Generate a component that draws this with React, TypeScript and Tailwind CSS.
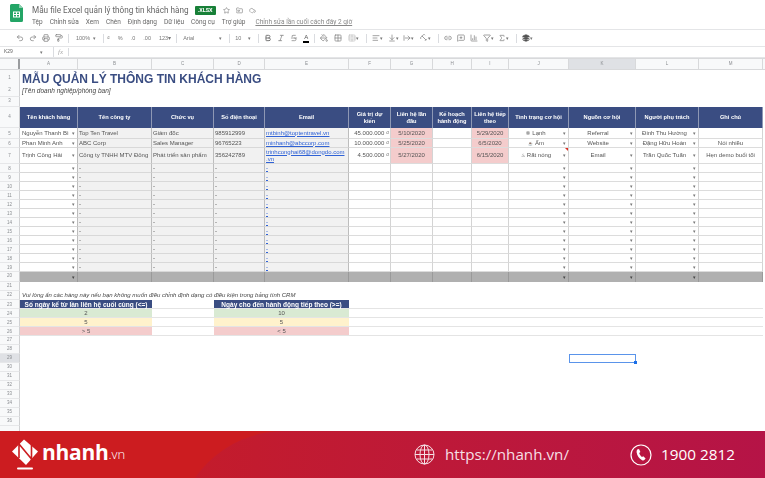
import {
  Undo2, Redo2, Printer, PaintRoller, Star, FolderInput, CloudCheck, Bold, Italic, Strikethrough,
  PaintBucket, Grid2x2, TableCellsMerge, AlignLeft, ArrowDownToLine, ArrowRightFromLine, Type, Link2,
  MessageSquarePlus, ChartColumn, Filter, Sigma, Layers, Snowflake,
} from "lucide-react";

const COLS = "grid-cols-[20px_58px_74px_62px_51px_84px_42px_42px_39px_37px_60px_67px_63px_64px]";
const BLUE = "bg-[#3a4d82]";
const GREY = "bg-[#f1f1f1]";

const columns = ["A", "B", "C", "D", "E", "F", "G", "H", "I", "J", "K", "L", "M"];

const headers = [
  "Tên khách hàng", "Tên công ty", "Chức vụ", "Số điện thoại", "Email", "Giá trị dự\nkiến",
  "Liên hệ lần\nđầu", "Kế hoạch\nhành động", "Liên hệ tiếp\ntheo", "Tình trạng cơ hội",
  "Nguồn cơ hội", "Người phụ trách", "Ghi chú",
];

const people = [
  {
    h: "h-[11px]", n: "5", name: "Nguyễn Thanh Bì", co: "Top Ten Travel", role: "Giám đốc", phone: "985912999",
    mail: ["mtbinh@toptentravel.vn"], val: "45.000.000 ₫", first: "5/10/2020", next: "5/29/2020",
    status: "Lạnh", icon: "snow", src: "Referral", owner: "Đinh Thu Hường", note: "",
  },
  {
    h: "h-[9px]", n: "6", name: "Phan Minh Anh", co: "ABC Corp", role: "Sales Manager", phone: "96765223",
    mail: ["minhanh@abccorp.com"], val: "10.000.000 ₫", first: "5/25/2020", next: "6/5/2020",
    status: "Ấm", icon: "warm", src: "Website", owner: "Đặng Hữu Hoàn", note: "Nói nhiều",
  },
  {
    h: "h-[16px]", n: "7", name: "Trịnh Công Hải", co: "Công ty TNHH MTV Đông", role: "Phát triển sản phẩm", phone: "356242789",
    mail: ["trinhconghai68@dongdo.com", ".vn"], val: "4.500.000 ₫", first: "5/27/2020", next: "6/15/2020",
    status: "Rất nóng", icon: "hot", src: "Email", owner: "Trần Quốc Tuấn", note: "Hẹn demo buổi tối",
  },
];

const emptyRows = ["8", "9", "10", "11", "12", "13", "14", "15", "16", "17", "18", "19"];

function RowNo({ n, active }: { n: string; active?: boolean }) {
  return (
    <div className={`flex items-center justify-center border-r border-b border-r-[#d0d1d3] border-b-[#e6e7e9] text-[4.5px] text-[#8a8d91] ${active ? "bg-[#dfe1e5]" : "bg-[#f8f9fa]"}`}>
      {n}
    </div>
  );
}

function Arrow({ dark }: { dark?: boolean }) {
  return <span className={`mr-[2px] shrink-0 text-[5px] leading-none ${dark ? "text-[#444]" : "text-[#777]"}`}>▾</span>;
}

function Tool({ label, className = "" }: { label: string; className?: string }) {
  return <span className={`text-[5.5px] text-[#777] ${className}`}>{label}</span>;
}

function Sep() {
  return <span className="mx-[5px] h-[9px] w-px shrink-0 bg-[#dadce0]" />;
}

function Toolbar() {
  const ic = "h-[8px] w-[8px] shrink-0 text-[#777]";
  return (
    <div className="flex h-[18px] items-center border-y border-[#e4e5e7] pl-[16px]">
      <div className="flex items-center gap-[5px]">
        <Undo2 className={ic} /><Redo2 className={ic} /><Printer className={ic} /><PaintRoller className={ic} />
      </div>
      <Sep />
      <Tool label="100%" className="ml-[2px] w-[17px]" /><Arrow />
      <Sep />
      <div className="-ml-[2px] flex items-center gap-[8px]">
        <Tool label="₫" /><Tool label="%" /><Tool label=".0" /><Tool label=".00" /><Tool label="123▾" />
      </div>
      <Sep />
      <Tool label="Arial" className="ml-[1px] w-[36px]" /><Arrow />
      <Sep />
      <Tool label="10" className="w-[13px]" /><Arrow />
      <Sep />
      <div className="flex items-center gap-[5px]">
        <Bold className={ic} strokeWidth={3} /><Italic className={ic} /><Strikethrough className={ic} />
        <span className="border-b-2 border-black px-[1px] text-[6px] leading-[7px] text-[#555]">A</span>
      </div>
      <Sep />
      <div className="flex items-center gap-[6px]">
        <PaintBucket className={ic} /><Grid2x2 className={ic} /><TableCellsMerge className="h-[8px] w-[8px] shrink-0 text-[#bbb]" />
      </div>
      <Arrow />
      <Sep />
      <AlignLeft className={ic} /><Arrow />
      <ArrowDownToLine className={`${ic} ml-[3px]`} /><Arrow />
      <ArrowRightFromLine className={`${ic} ml-[2px]`} /><Arrow />
      <Type className={`${ic} ml-[4px] -rotate-45`} /><Arrow />
      <Sep />
      <div className="flex items-center gap-[5px]">
        <Link2 className={ic} /><MessageSquarePlus className={ic} /><ChartColumn className={ic} /><Filter className={ic} />
      </div>
      <Arrow />
      <Sigma className={`${ic} ml-[2px]`} /><Arrow />
      <Sep />
      <Layers className="h-[8px] w-[8px] shrink-0 fill-[#555] text-[#555]" /><Arrow />
    </div>
  );
}

function PersonRow({ p }: { p: (typeof people)[number] }) {
  const line = "border-r border-b border-r-[#d4d4d4] border-b-[#dcdcdc]";
  const greyCell = `${GREY} flex items-center overflow-hidden whitespace-nowrap border-r border-b border-r-[#bdbdbd] border-b-[#d8d8d8] px-[1px]`;
  return (
    <div className={`grid ${COLS} ${p.h} text-[6px] leading-[7px] text-[#555]`}>
      <RowNo n={p.n} />
      <div className="flex items-center overflow-hidden whitespace-nowrap border-r border-b border-r-[#bdbdbd] border-b-[#d8d8d8] pl-[2px]">
        <span className="flex-1 overflow-hidden">{p.name}</span><Arrow />
      </div>
      <div className={greyCell}>{p.co}</div>
      <div className={greyCell}>{p.role}</div>
      <div className={greyCell}>{p.phone}</div>
      <div className={`${GREY} flex flex-col justify-center overflow-hidden border-r border-b border-r-[#bdbdbd] border-b-[#d8d8d8] px-[1px] text-[#2f62d6] underline`}>
        {p.mail.map((m) => <span key={m} className="whitespace-nowrap">{m}</span>)}
      </div>
      <div className={`${line} flex items-center justify-end pr-[1px] whitespace-nowrap`}>{p.val}</div>
      <div className={`${line} flex items-center justify-center bg-[#f4cccc]`}>{p.first}</div>
      <div className={line} />
      <div className={`${line} flex items-center justify-center bg-[#f4cccc]`}>{p.next}</div>
      <div className={`${line} relative flex items-center whitespace-nowrap`}>
        <span className="flex flex-1 items-center justify-center gap-[2px]">
          {p.icon === "snow" && <Snowflake className="h-[4px] w-[4px] text-[#666]" />}
          {p.icon === "warm" && <span className="text-[4px]">☕</span>}
          {p.icon === "hot" && <span className="text-[5px]">♨</span>}
          {p.status}
        </span>
        <Arrow />
        {p.n === "7" && <span className="absolute top-0 right-0 h-0 w-0 border-t-[3px] border-l-[3px] border-t-[#d93025] border-l-transparent" />}
      </div>
      <div className={`${line} flex items-center`}>
        <span className="flex-1 pr-[3px] text-center">{p.src}</span><Arrow />
      </div>
      <div className={`${line} flex items-center whitespace-nowrap`}>
        <span className="flex-1 text-center">{p.owner}</span><Arrow />
      </div>
      <div className={`${line} flex items-center justify-center whitespace-nowrap`}>{p.note}</div>
    </div>
  );
}

function EmptyRow({ n }: { n: string }) {
  const line = "border-r border-b border-r-[#d4d4d4] border-b-[#dcdcdc]";
  const greyCell = `${GREY} flex items-center border-r border-b border-r-[#bdbdbd] border-b-[#d8d8d8] px-[1px]`;
  return (
    <div className={`grid ${COLS} h-[9px] text-[6px] leading-[7px] text-[#555]`}>
      <RowNo n={n} />
      <div className="flex items-center justify-end border-r border-b border-r-[#bdbdbd] border-b-[#d8d8d8]"><Arrow /></div>
      <div className={greyCell}>-</div>
      <div className={greyCell}>-</div>
      <div className={greyCell}>-</div>
      <div className={`${greyCell} text-[#2f62d6] underline`}>-</div>
      <div className={line} />
      <div className={line} />
      <div className={line} />
      <div className={line} />
      <div className={`${line} flex items-center justify-end`}><Arrow /></div>
      <div className={`${line} flex items-center justify-end`}><Arrow /></div>
      <div className={`${line} flex items-center justify-end`}><Arrow /></div>
      <div className={line} />
    </div>
  );
}

function GreyBar() {
  const cell = "flex items-center justify-end border-r border-r-[#9a9a9a] bg-[#b0b0b0]";
  return (
    <div className={`grid ${COLS} h-[10px]`}>
      <RowNo n="20" />
      {columns.map((c) => (
        <div key={c} className={cell}>{["A", "J", "K", "L"].includes(c) && <Arrow dark />}</div>
      ))}
    </div>
  );
}

function LegendRow({ n, a, b, color, head }: { n: string; a: string; b: string; color: string; head?: boolean }) {
  const text = head ? "font-bold text-white text-[6.5px]" : "text-[#555] text-[6px]";
  return (
    <div className={`grid ${COLS} h-[9px] leading-[7px]`}>
      <RowNo n={n} />
      <div className={`col-span-2 flex items-center justify-center whitespace-nowrap border-b border-[#e4e4e4] ${color} ${text}`}>{a}</div>
      <div className="border-b border-[#e4e4e4]" />
      <div className={`col-span-2 flex items-center justify-center whitespace-nowrap border-b border-[#e4e4e4] ${color} ${text}`}>{b}</div>
      <div className="col-span-8 border-b border-[#e4e4e4]" />
    </div>
  );
}

function BlankRow({ n, sel }: { n: string; sel?: boolean }) {
  return (
    <div className={`grid ${COLS} h-[9px]`}>
      <RowNo n={n} active={sel} />
      {sel && (
        <>
          <div className="col-span-10" />
          <div className="relative border border-[#5a94ea]">
            <span className="absolute -right-[2px] -bottom-[2px] h-[3px] w-[3px] bg-[#1a6fe8]" />
          </div>
        </>
      )}
    </div>
  );
}

function NhanhLogo() {
  return (
    <svg width="27" height="32" viewBox="0 0 27 32" className="shrink-0">
      <path d="M0 12.5 12 0.5 26 12.5 14 26Z" fill="#fff" />
      <path d="M7 3v16M19.5 6v16M7 5l12.5 15" stroke="#cc1c20" strokeWidth="1.6" fill="none" />
      <rect x="5" y="28.5" width="16" height="2" rx="1" fill="#fff" />
    </svg>
  );
}

function GlobeIcon() {
  return (
    <svg width="21" height="21" viewBox="0 0 21 21" fill="none" stroke="#f6dfe4" strokeWidth="1" className="shrink-0">
      <circle cx="10.5" cy="10.5" r="9.5" />
      <ellipse cx="10.5" cy="10.5" rx="4.5" ry="9.5" />
      <path d="M10.5 1v19M1 10.5h19M2.5 6h16M2.5 15h16" />
    </svg>
  );
}

function PhoneIcon() {
  return (
    <svg width="22" height="22" viewBox="0 0 22 22" fill="none" className="shrink-0">
      <circle cx="11" cy="11" r="10" stroke="#fff" strokeWidth="1.2" />
      <path d="M7.2 5.6 9 5l1.4 3-1.2 1c.5 1.6 1.5 3 2.8 4l1.3-.8 2.3 2.4-1.3 1.5c-.6.5-1.5.5-2.2.1-3-1.7-5-4.6-5.5-8-.1-1 .1-2 .6-2.6Z" fill="#fff" />
    </svg>
  );
}

export default function App() {
  return (
    <div className="flex h-[478px] w-[765px] flex-col overflow-hidden bg-white font-['Liberation_Sans',sans-serif]">
      <div className="h-[431px] shrink-0 overflow-hidden blur-[0.4px]">
        {/* Sheets header */}
        <div className="flex h-[29px] items-start pl-[10px] font-['Roboto',sans-serif]">
          <svg width="13" height="18" viewBox="0 0 13 18" className="mt-[4px] shrink-0">
            <path d="M1.5 0H9l4 4v12.5a1.5 1.5 0 0 1-1.5 1.5h-10A1.5 1.5 0 0 1 0 16.5v-15A1.5 1.5 0 0 1 1.5 0Z" fill="#23a566" />
            <path d="M9 0l4 4H9Z" fill="#8ed1b1" />
            <path d="M3 7.5h7v6H3Zm1 1v1.5h2V8.5Zm3 0v1.5h2V8.5Zm-3 2.5v1.5h2V11Zm3 0v1.5h2V11Z" fill="#fff" fillRule="evenodd" />
          </svg>
          <div className="ml-[9px] flex flex-col">
            <div className="mt-[4px] flex h-[13px] items-center">
              <span className="text-[8.2px] text-[#666]">Mẫu file Excel quản lý thông tin khách hàng</span>
              <span className="ml-[6px] rounded-[1px] bg-[#188038] px-[3px] text-[5.5px] leading-[9px] font-bold text-white">.XLSX</span>
              <Star className="ml-[7px] h-[7px] w-[7px] text-[#777]" />
              <FolderInput className="ml-[6px] h-[7px] w-[7px] text-[#777]" />
              <CloudCheck className="ml-[6px] h-[7px] w-[7px] text-[#777]" />
            </div>
            <div className="mt-[1px] flex items-center gap-[7px] text-[6.5px] text-[#666]">
              <span>Tệp</span><span>Chỉnh sửa</span><span>Xem</span><span>Chèn</span><span>Định dạng</span>
              <span>Dữ liệu</span><span>Công cụ</span><span>Trợ giúp</span>
              <span className="ml-[3px] text-[#888] underline">Chỉnh sửa lần cuối cách đây 2 giờ</span>
            </div>
          </div>
        </div>
        <Toolbar />
        {/* Formula bar */}
        <div className="flex h-[11px] items-center border-b border-[#e4e5e7] text-[5px] text-[#666]">
          <span className="w-[40px] pl-[4px]">K29</span>
          <Arrow />
          <span className="ml-[8px] border-l border-[#dadce0] pl-[4px] font-['Liberation_Serif',serif] text-[7px] text-[#aaa] italic">fx</span>
          <span className="ml-[5px] h-[8px] w-px bg-[#dadce0]" />
        </div>
        {/* Column letters */}
        <div className={`grid ${COLS} h-[12px] border-y border-[#d8d9db] bg-[#f8f9fa] text-[4.5px] text-[#8a8d91]`}>
          <div className="border-r-2 border-[#9a9c9f]" />
          {columns.map((c) => (
            <div key={c} className={`flex items-center justify-center border-r border-[#d8d9db] ${c === "K" ? "bg-[#dfe1e5]" : ""}`}>{c}</div>
          ))}
        </div>
        {/* Title rows */}
        <div className={`grid ${COLS} h-[15px]`}>
          <RowNo n="1" />
          <div className="col-span-13 flex items-center whitespace-nowrap pl-[2px] text-[12px] font-bold text-[#3a4d82]">MẪU QUẢN LÝ THÔNG TIN KHÁCH HÀNG</div>
        </div>
        <div className={`grid ${COLS} h-[12px]`}>
          <RowNo n="2" />
          <div className="col-span-13 flex items-center pl-[2px] text-[6.5px] text-[#444] italic">[Tên doanh nghiệp/phòng ban]</div>
        </div>
        <div className={`grid ${COLS} h-[10px]`}>
          <RowNo n="3" />
        </div>
        {/* Table header */}
        <div className={`grid ${COLS} h-[21px]`}>
          <RowNo n="4" />
          {headers.map((h) => (
            <div key={h} className={`${BLUE} flex items-center justify-center whitespace-pre-line border-r border-[#8e98b4] text-center text-[5.7px] leading-[7px] font-bold text-white`}>{h}</div>
          ))}
        </div>
        {people.map((p) => <PersonRow key={p.n} p={p} />)}
        {emptyRows.map((n) => <EmptyRow key={n} n={n} />)}
        <GreyBar />
        <BlankRow n="21" />
        <div className={`grid ${COLS} h-[9px]`}>
          <RowNo n="22" />
          <div className="col-span-13 flex items-center whitespace-nowrap pl-[2px] text-[6px] text-[#444] italic">Vui lòng ẩn các hàng này nếu bạn không muốn điều chỉnh định dạng có điều kiện trong bảng tính CRM</div>
        </div>
        <LegendRow n="23" a="Số ngày kể từ lần liên hệ cuối cùng (<=)" b="Ngày cho đến hành động tiếp theo (>=)" color={BLUE} head />
        <LegendRow n="24" a="2" b="10" color="bg-[#d9ead3]" />
        <LegendRow n="25" a="5" b="5" color="bg-[#fff2cc]" />
        <LegendRow n="26" a="> 5" b="< 5" color="bg-[#f4cccc]" />
        {["27", "28"].map((n) => <BlankRow key={n} n={n} />)}
        <BlankRow n="29" sel />
        {["30", "31", "32", "33", "34", "35", "36", ""].map((n) => <BlankRow key={`r${n}`} n={n} />)}
      </div>

      {/* Footer banner */}
      <div className="relative flex h-[47px] shrink-0 items-center overflow-hidden bg-[#cc1c20] font-['Open_Sans',sans-serif] text-white">
        <div className="absolute top-0 left-[175px] h-[120px] w-[800px] rounded-tl-[110px] bg-gradient-to-r from-[#c41c2a] to-[#b00f4e]" />
        <div className="relative ml-[12px] flex w-[380px] items-center">
          <NhanhLogo />
          <span className="-mt-[4px] ml-[3px] text-[21px] leading-none font-bold tracking-[-0.3px]">nhanh</span>
          <span className="-mt-[1px] text-[13px] leading-none font-light">.vn</span>
        </div>
        <div className="relative ml-[22px] flex w-[216px] items-center">
          <GlobeIcon />
          <span className="ml-[10px] text-[15.2px] leading-none text-[#f6dfe4]">https://nhanh.vn/</span>
        </div>
        <div className="relative flex items-center">
          <PhoneIcon />
          <span className="ml-[9px] text-[15.3px] leading-none">1900 2812</span>
        </div>
      </div>
    </div>
  );
}
